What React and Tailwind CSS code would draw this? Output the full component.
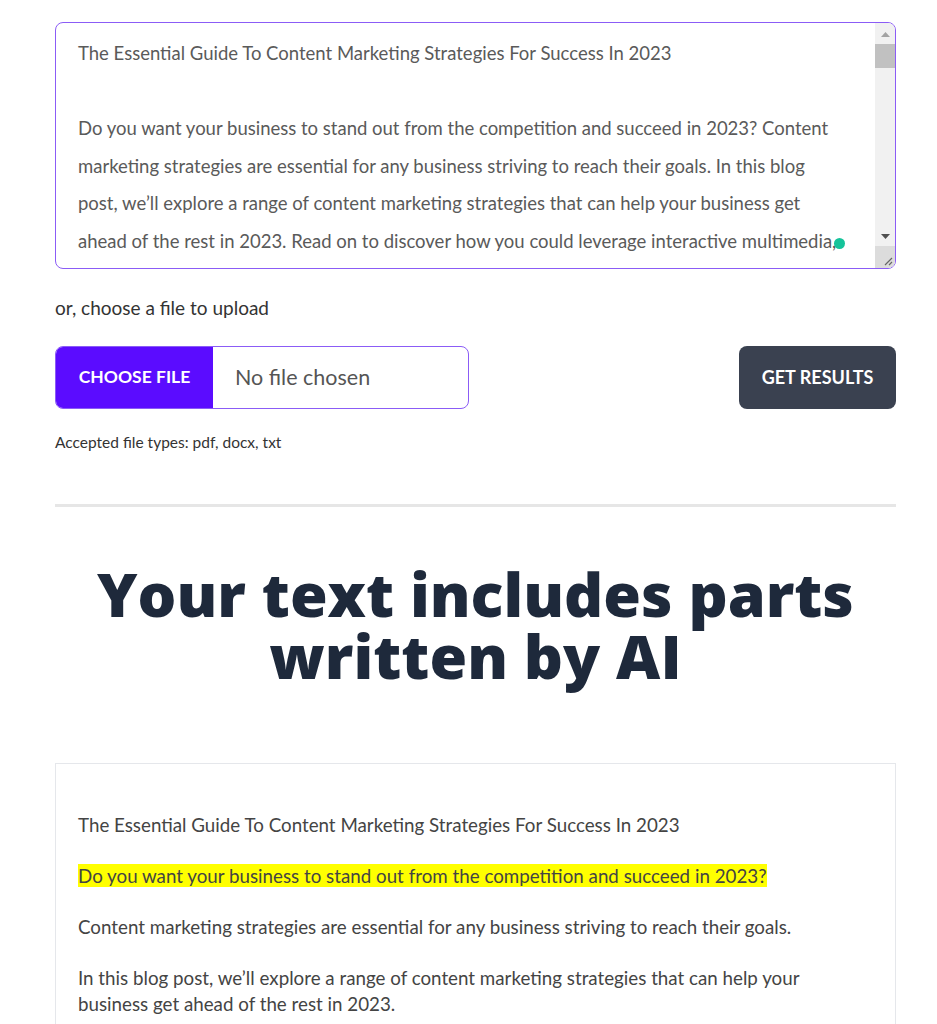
import React from "react";

const lines = [
  "The Essential Guide To Content Marketing Strategies For Success In 2023",
  "",
  "Do you want your business to stand out from the competition and succeed in 2023? Content",
  "marketing strategies are essential for any business striving to reach their goals. In this blog",
  "post, we’ll explore a range of content marketing strategies that can help your business get",
  "ahead of the rest in 2023. Read on to discover how you could leverage interactive multimedia,",
];

export default function App() {
  return (
    <div className="bg-white min-h-screen w-[937px]" style={{ fontFamily: "Lato, 'Open Sans', sans-serif" }}>
      <div className="pl-[55px] pr-[41px] pt-[22px]">
        <div className="relative flex h-[247px] border border-[#8b5cf6] rounded-[8px] overflow-hidden">
          <div className="flex-1 overflow-hidden pl-[22px] pt-[12px] text-[18.5px] leading-[37.5px] text-[#5a5a5a]">
            {lines.map((l, i) => (
              <div key={i} className="whitespace-nowrap h-[37.5px]">{l}</div>
            ))}
          </div>
          <div className="w-[20px] bg-[#f1f1f1] flex flex-col items-center">
            <div className="h-[21px] flex items-center justify-center pt-[2px]">
              <svg width="9" height="5" viewBox="0 0 9 5"><path d="M0 5 L4.5 0 L9 5 Z" fill="#a3a3a3" /></svg>
            </div>
            <div className="w-[20px] h-[24px] bg-[#c1c1c1]"></div>
            <div className="flex-1"></div>
            <div className="h-[20px] flex items-center justify-center">
              <svg width="9" height="5" viewBox="0 0 9 5"><path d="M0 0 L4.5 5 L9 0 Z" fill="#505050" /></svg>
            </div>
            <div className="w-[20px] h-[22px] bg-[#dcdcdc] flex items-end justify-end pr-[2px] pb-[2px]">
              <svg width="10" height="10" viewBox="0 0 10 10"><path d="M9 2 L2 9 M9 6 L6 9" stroke="#666" strokeWidth="1.2" /></svg>
            </div>
          </div>
          <span className="absolute left-[778px] top-[215px] w-[11px] h-[11px] rounded-full bg-[#15c39a]"></span>
        </div>

        <p className="mt-[25px] text-[19px] text-[#333]">or, choose a file to upload</p>

        <div className="mt-[23px] flex items-center justify-between">
          <div className="flex w-[414px] h-[63px] border border-[#8b5cf6] rounded-[8px] overflow-hidden">
            <div className="w-[157px] bg-[#5b0cff] flex items-center justify-center text-white font-bold text-[17.5px]">CHOOSE FILE</div>
            <div className="flex items-center pl-[22px] text-[21.5px] text-[#555]">No file chosen</div>
          </div>
          <button className="w-[157px] h-[63px] rounded-[8px] bg-[#3a4150] text-white font-bold text-[18px]">GET RESULTS</button>
        </div>

        <p className="mt-[22px] text-[15.5px] text-[#333]">Accepted file types: pdf, docx, txt</p>

        <div className="mt-[50px] h-[3px] bg-[#e6e6e6]"></div>

        <h1 className="mt-[56px] text-center text-[61px] leading-[62px] font-extrabold text-[#1e293b]" style={{ fontFamily: "'Open Sans', sans-serif" }}>
          Your text includes parts<br />written by AI
        </h1>

        <div className="mt-[76px] border border-[#e5e7eb] pt-[48px] px-[22px] pb-[24px] text-[18.75px] text-[#444] leading-[26px]">
          <p>The Essential Guide To Content Marketing Strategies For Success In 2023</p>
          <p className="mt-[25px]"><span className="bg-[#ffff00]">Do you want your business to stand out from the competition and succeed in 2023?</span></p>
          <p className="mt-[25px]">Content marketing strategies are essential for any business striving to reach their goals.</p>
          <p className="mt-[25px]">In this blog post, we’ll explore a range of content marketing strategies that can help your<br />business get ahead of the rest in 2023.</p>
          <p className="mt-[25px]">Read on to discover how you could leverage interactive multimedia, personalized content and data-driven insights.</p>
        </div>
      </div>
    </div>
  );
}
